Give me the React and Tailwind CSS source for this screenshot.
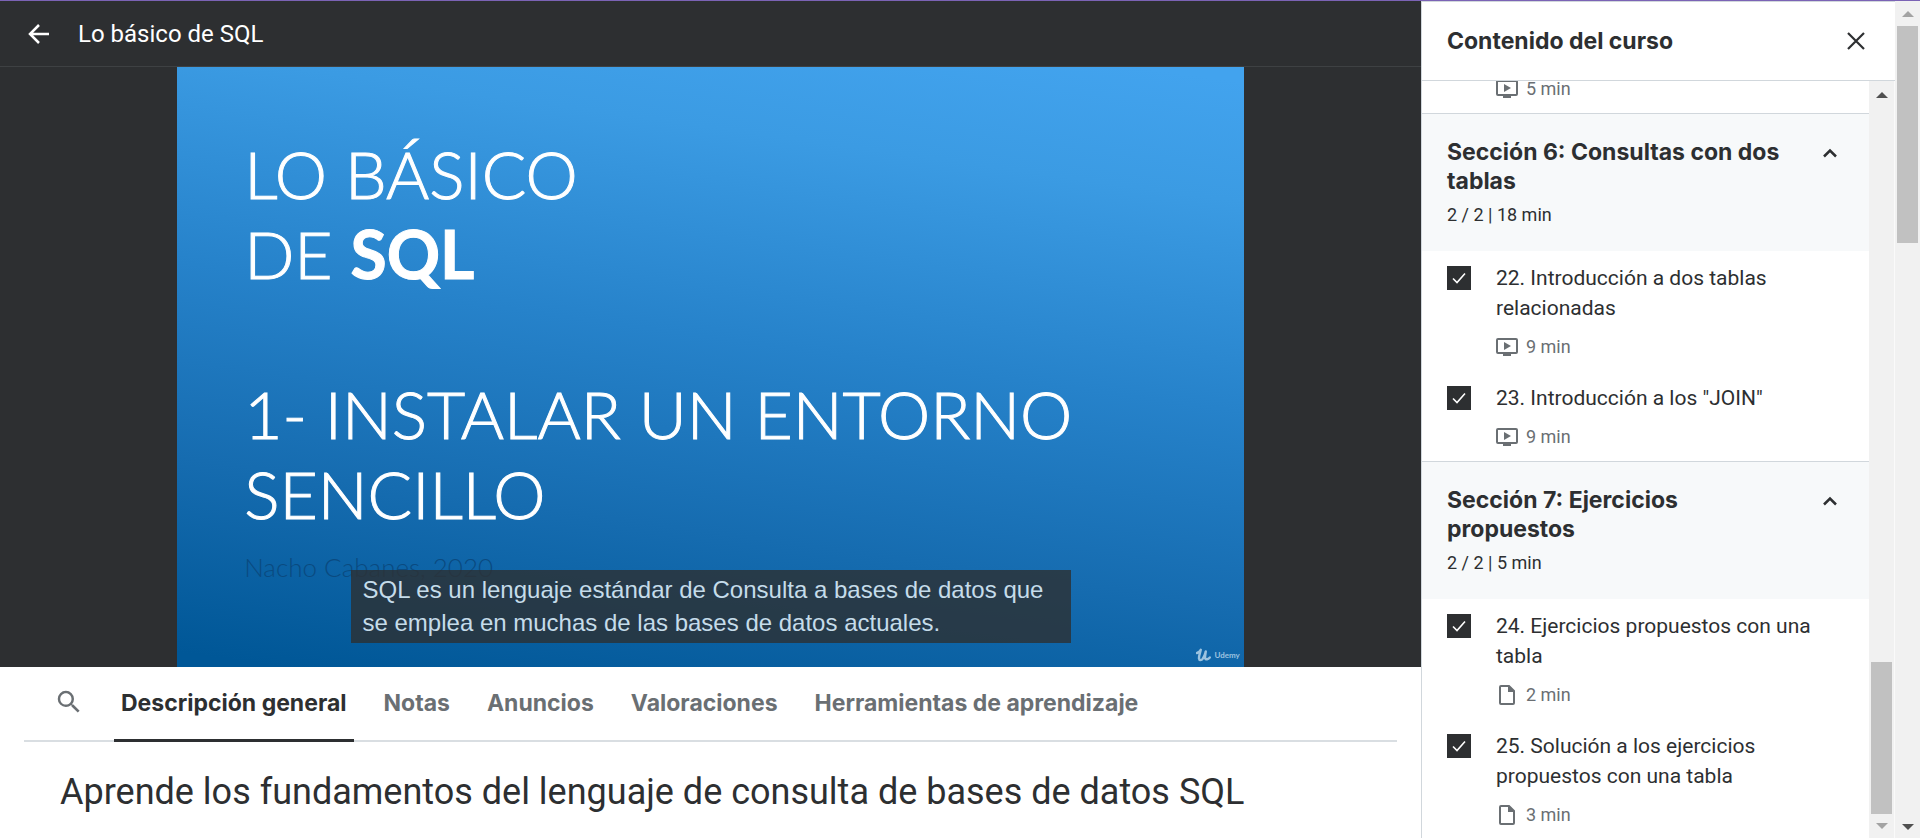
import React, { useState } from "react";
import { MdSearch } from "react-icons/md";

const TABS = ["Descripción general", "Notas", "Anuncios", "Valoraciones", "Herramientas de aprendizaje"];

const SECTIONS = [
  {
    title: "Sección 6: Consultas con dos tablas",
    progress: "2 / 2 | 18 min",
    lessons: [
      { id: 22, title: "22. Introducción a dos tablas relacionadas", time: "9 min", kind: "video" },
      { id: 23, title: '23. Introducción a los "JOIN"', time: "9 min", kind: "video" },
    ],
  },
  {
    title: "Sección 7: Ejercicios propuestos",
    progress: "2 / 2 | 5 min",
    lessons: [
      { id: 24, title: "24. Ejercicios propuestos con una tabla", time: "2 min", kind: "file" },
      { id: 25, title: "25. Solución a los ejercicios propuestos con una tabla", time: "3 min", kind: "file" },
    ],
  },
];

function VideoIcon() {
  return (
    <svg width="22" height="18" viewBox="0 0 22 18" fill="none" aria-hidden="true">
      <rect x="1" y="1" width="20" height="14" rx="1" stroke="currentColor" strokeWidth="2" />
      <path d="M8 4v8l7-4z" fill="currentColor" />
      <path d="M7 15h8v3H7z" fill="currentColor" />
    </svg>
  );
}

function FileIcon() {
  return (
    <svg width="22" height="20" viewBox="0 0 22 20" fill="none" aria-hidden="true">
      <path d="M5 1h8l5 5v12a1 1 0 0 1-1 1H5a1 1 0 0 1-1-1V2a1 1 0 0 1 1-1z" stroke="currentColor" strokeWidth="2" />
      <path d="M12 1h1l5 5v1h-6z" fill="currentColor" />
    </svg>
  );
}

function LessonMeta({ kind, time }) {
  return (
    <div className="flex h-[30px] items-center gap-2 text-lg leading-[30px] text-[#6a6f73]">
      {kind === "video" ? <VideoIcon /> : <FileIcon />}
      <span>{time}</span>
    </div>
  );
}

function Lesson({ lesson }) {
  const [done, setDone] = useState(true);
  const inputId = `lesson-${lesson.id}`;
  return (
    <li className="flex items-start gap-[25px] px-[25px] pt-3 pb-[9px]">
      <span className="mt-[3px] grid size-6 shrink-0 place-items-center">
        <input
          id={inputId}
          type="checkbox"
          checked={done}
          onChange={() => setDone(!done)}
          className="peer col-start-1 row-start-1 size-6 appearance-none border border-[#2d2f31] checked:bg-[#2d2f31]"
        />
        <svg
          className="pointer-events-none invisible col-start-1 row-start-1 text-white peer-checked:visible"
          width="14"
          height="12"
          viewBox="0 0 14 12"
          fill="none"
          aria-hidden="true"
        >
          <path d="M1 6.5l4 4L13 1.5" stroke="currentColor" strokeWidth="1.6" />
        </svg>
      </span>
      <div className="flex min-w-0 flex-1 flex-col gap-[9px]">
        <label htmlFor={inputId} className="text-[21px] leading-[30px]">
          {lesson.title}
        </label>
        <LessonMeta kind={lesson.kind} time={lesson.time} />
      </div>
    </li>
  );
}

function Section({ section }) {
  const [open, setOpen] = useState(true);
  return (
    <section>
      <button
        type="button"
        aria-expanded={open}
        onClick={() => setOpen(!open)}
        className="flex w-full items-start justify-between gap-9 border-t border-[#d1d7dc] bg-[#f7f9fa] pt-6 pr-8 pb-[23px] pl-[25px] text-left"
      >
        <span className="flex flex-1 flex-col gap-[6px]">
          <span className="font-['Inter',sans-serif] text-[23px] leading-[29px] font-bold">{section.title}</span>
          <span className="text-lg leading-[26px]">{section.progress}</span>
        </span>
        <svg className="mt-[10px] shrink-0" width="14" height="10" viewBox="0 0 14 10" fill="none" aria-hidden="true">
          <path d="M1 8.5l6-6 6 6" stroke="currentColor" strokeWidth="2.5" />
        </svg>
      </button>
      {open && (
        <ul>
          {section.lessons.map((lesson) => (
            <Lesson key={lesson.id} lesson={lesson} />
          ))}
        </ul>
      )}
    </section>
  );
}

function Arrow({ down = false, dim = false }) {
  return (
    <svg
      className={dim ? "text-[#a3a3a3]" : "text-[#505050]"}
      width="12"
      height="6"
      viewBox="0 0 12 6"
      aria-hidden="true"
    >
      <path d={down ? "M0 0h12L6 6z" : "M0 6h12L6 0z"} fill="currentColor" />
    </svg>
  );
}

function Slide() {
  return (
    <div className="relative flex aspect-video h-[600px] flex-col bg-linear-[188deg,#42a3ee_2%,#3b9be3_18%,#2682ca_46%,#166cb0_72%,#005797_98%] px-[67px] pt-[67px] font-['Lato',sans-serif] font-light text-white">
      <h1 className="text-[66px] leading-[80px] [-webkit-text-stroke:1px_white]">
        LO BÁSICO
        <br />
        DE <b className="font-bold">SQL</b>
      </h1>
      <h2 className="mt-20 text-[66px] leading-[80px] [-webkit-text-stroke:1px_white]">
        1- INSTALAR UN ENTORNO
        <br />
        SENCILLO
      </h2>
      <p className="mt-[17px] text-[26px] leading-8 text-[#0a4a80]">Nacho Cabanes, 2020</p>
      <div className="absolute inset-x-0 bottom-6 flex justify-center">
        <p className="w-[720px] bg-[#2d2f31]/80 px-3 pt-[3px] pb-1 font-['Liberation_Sans',Arial,sans-serif] text-2xl leading-[33px] font-normal text-[#c5dcea]">
          SQL es un lenguaje estándar de Consulta a bases de datos que se emplea en muchas de las bases de datos actuales.
        </p>
      </div>
      <div className="absolute right-1 bottom-[5px] flex items-center gap-[3px] text-[#9cc3e0]">
        <svg width="15" height="14" viewBox="0 0 15 14" fill="none" aria-hidden="true">
          <path
            d="M1 5C3 4.500 4.300 3 4.800 1.800C4.200 4.500 2.800 8 3 10.500c.3 2.300 2.600 2 3.800.2C8 8.800 9.300 5.500 9.800 3.500C9.400 6 8.800 8.800 9.200 10.300c.5 1.600 2.800 1.200 4.600-.8"
            stroke="currentColor"
            strokeWidth="2.4"
            strokeLinecap="round"
            strokeLinejoin="round"
          />
        </svg>
        <span className="text-[8px] leading-3 font-bold">Udemy</span>
      </div>
    </div>
  );
}

export default function App() {
  const [tab, setTab] = useState(TABS[0]);
  return (
    <div className="flex h-screen flex-col overflow-hidden border-t border-[#7b63b5] bg-white font-['Roboto',sans-serif] text-[#2d2f31]">
      <div className="flex min-h-0 flex-1">
        <main className="min-w-0 flex-1 overflow-hidden">
          <header className="flex h-[66px] items-center gap-[29px] border-b border-[#3e4143] bg-[#2d2f31] pl-7 text-white">
            <button type="button" aria-label="Volver">
              <svg width="21" height="20" viewBox="0 0 21 20" fill="none" aria-hidden="true">
                <path d="M11 1L2 10l9 9M2 10h19" stroke="currentColor" strokeWidth="2.5" />
              </svg>
            </button>
            <span className="text-2xl">Lo básico de SQL</span>
          </header>
          <div className="flex justify-center bg-[#2d2f31]">
            <Slide />
          </div>
          <nav className="mx-6 flex h-[75px] items-start border-b-2 border-[#d9dee2] pl-[30px]">
            <button type="button" aria-label="Buscar" className="mt-5 mr-[30px] text-[#6a6f73]">
              <MdSearch size={30} />
            </button>
            <div role="tablist" className="flex gap-[23px]">
              {TABS.map((name) => (
                <button
                  key={name}
                  type="button"
                  role="tab"
                  aria-selected={tab === name}
                  onClick={() => setTab(name)}
                  className={
                    "h-[75px] border-b-3 px-[7px] font-['Inter',sans-serif] text-[23px] font-bold whitespace-nowrap " +
                    (tab === name ? "border-[#2d2f31]" : "border-transparent text-[#6a6f73]")
                  }
                >
                  {name}
                </button>
              ))}
            </div>
          </nav>
          <h2 className="mt-7 pr-6 pl-[60px] text-4xl leading-[44px]">
            Aprende los fundamentos del lenguaje de consulta de bases de datos SQL
          </h2>
        </main>

        <aside className="flex w-[474px] shrink-0 flex-col border-l border-[#d1d7dc]">
          <div className="flex h-[80px] shrink-0 items-center justify-between border-y border-[#d1d7dc] pr-[30px] pl-[25px]">
            <h2 className="font-['Inter',sans-serif] text-[23px] font-bold">Contenido del curso</h2>
            <button type="button" aria-label="Cerrar">
              <svg width="18" height="18" viewBox="0 0 18 18" fill="none" aria-hidden="true">
                <path d="M1 1l16 16M17 1L1 17" stroke="currentColor" strokeWidth="2.2" />
              </svg>
            </button>
          </div>
          <div className="flex min-h-0 flex-1">
            <div className="min-w-0 flex-1 overflow-hidden">
              <div className="flex h-8 flex-col justify-end overflow-hidden pb-[9px] pl-[74px]">
                <LessonMeta kind="video" time="5 min" />
              </div>
              {SECTIONS.map((section) => (
                <Section key={section.title} section={section} />
              ))}
            </div>
            <div
              aria-hidden="true"
              className="flex w-[26px] shrink-0 flex-col items-center border-r border-[#fafafa] bg-[#f1f1f1] pt-[11px] pb-[9px]"
            >
              <Arrow />
              <span className="mt-auto mb-[9px] h-[152px] w-[21px] bg-[#c1c1c1]" />
              <Arrow down dim />
            </div>
          </div>
        </aside>

        <div
          aria-hidden="true"
          className="flex w-[25px] shrink-0 flex-col items-center bg-[#f1f1f1] pt-[10px] pb-2"
        >
          <Arrow dim />
          <span className="mt-[9px] mb-auto h-[217px] w-[21px] bg-[#c1c1c1]" />
          <Arrow down />
        </div>
      </div>
    </div>
  );
}
